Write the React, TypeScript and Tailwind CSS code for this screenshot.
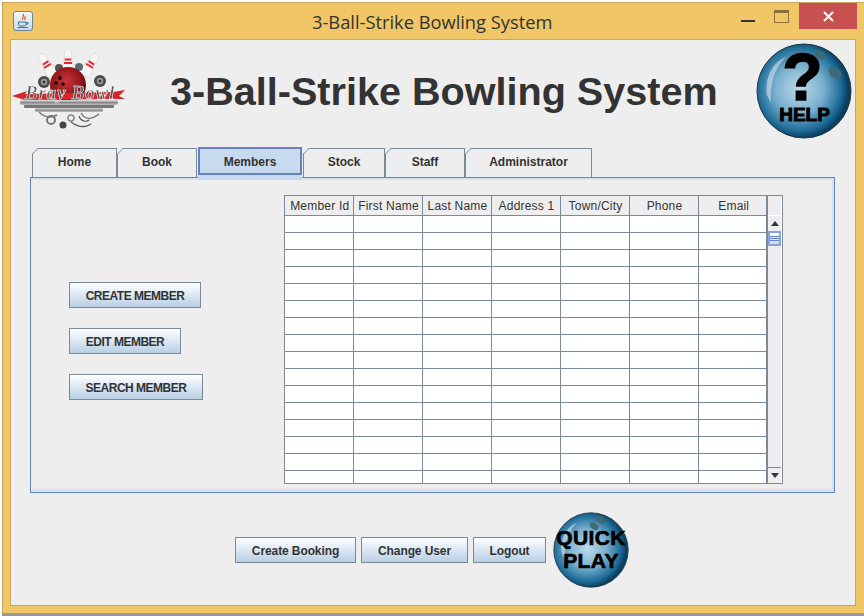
import React from "react";

const FONT = "[font-family:'Liberation_Sans',Arial,sans-serif]";

function MetalButton({ label, w, upper }: { label: string; w: number; upper?: boolean }) {
  return (
    <button
      style={{ width: w }}
      className={
        upper
          ? "shrink-0 h-[26px] pt-[1px] border border-[#7a8a99] bg-gradient-to-b from-[#ffffff] to-[#b8cfe5] text-[12px] font-bold text-[#333333] leading-none tracking-[-0.5px]"
          : "shrink-0 h-[26px] pt-[1px] border border-[#7a8a99] bg-gradient-to-b from-[#ffffff] to-[#b8cfe5] text-[12px] font-bold text-[#333333] leading-none tracking-[-0.1px]"
      }
    >
      {label}
    </button>
  );
}

function Tab({ label, w, selected }: { label: string; w: number; selected?: boolean }) {
  if (selected) {
    return (
      <div style={{ width: w }} className="relative z-10 h-[33px] shrink-0 -mb-[3px] flex flex-col">
        <div className="h-[28px] ml-[1px] mr-[1px] pt-[1px] border-2 border-[#6382bf] bg-[#c8daef] flex items-center justify-center text-[12px] font-bold text-[#333333]">
          {label}
        </div>
        <div className="flex-1 ml-[1px] mr-[1px] bg-[#c8daef]" />
      </div>
    );
  }
  return (
    <div
      style={{ width: w }}
      className="relative h-[29px] shrink-0 border-t border-r border-l border-[#7a8a99] bg-[#eeeeee] flex items-center justify-center text-[12px] font-bold text-[#333333] pb-[3px]"
    >
      <svg className="absolute -left-px -top-px" width="7" height="7" viewBox="0 0 7 7">
        <path d="M0 0H6L0 6Z" fill="#eeeeee" />
        <path d="M0 6.5L6.5 0" stroke="#7a8a99" strokeWidth="1" fill="none" />
      </svg>
      {label}
    </div>
  );
}

function Pin({ rotate, x, y }: { rotate: number; x: number; y: number }) {
  return (
    <g transform={`translate(${x} ${y}) rotate(${rotate})`}>
      <path d="M0 -13C3.5 -13 4.5 -9 3.5 -5C3 -2 6 2 6 12L-6 12C-6 2 -3 -2 -3.5 -5C-4.5 -9 -3.5 -13 0 -13Z" fill="#f6f6f6" stroke="#c8c8c8" strokeWidth="0.5" />
      <rect x="-3.2" y="-3.5" width="6.4" height="2" fill="#e8262c" />
      <rect x="-4" y="0" width="8" height="2" fill="#e8262c" />
    </g>
  );
}

function Ring({ x, y, r }: { x: number; y: number; r: number }) {
  return (
    <g>
      <circle cx={x} cy={y} r={r} fill="#4a4a4a" />
      <circle cx={x} cy={y} r={r * 0.55} fill="#9a9a9a" />
      <circle cx={x} cy={y} r={r * 0.25} fill="#3a3a3a" />
    </g>
  );
}

function Logo() {
  return (
    <svg width="116" height="82" viewBox="0 0 116 82" className="shrink-0 blur-[0.35px]">
      <defs>
        <radialGradient id="rb" cx="45%" cy="40%" r="65%">
          <stop offset="0" stopColor="#c9373c" />
          <stop offset="0.6" stopColor="#96161c" />
          <stop offset="1" stopColor="#4f0a0e" />
        </radialGradient>
        <linearGradient id="bar" x1="0" y1="0" x2="0" y2="1">
          <stop offset="0" stopColor="#e2e2e2" />
          <stop offset="0.5" stopColor="#8a8a8a" />
          <stop offset="1" stopColor="#bdbdbd" />
        </linearGradient>
      </defs>
      <Pin rotate={-32} x={36} y={15} />
      <Pin rotate={0} x={57} y={12} />
      <Pin rotate={32} x={79} y={15} />
      <Ring x={33} y={32} r={6} />
      <Ring x={89} y={31} r={6} />
      <circle cx="48" cy="18" r="4" fill="#555555" />
      <circle cx="68" cy="17" r="4" fill="#5c6a70" />
      <circle cx="57" cy="35" r="18" fill="url(#rb)" />
      <circle cx="49" cy="28" r="2" fill="#1a0505" />
      <circle cx="45" cy="33" r="1.8" fill="#1a0505" />
      <circle cx="52" cy="34" r="1.8" fill="#1a0505" />
      <path d="M1 46L16 41L14 44L102 42L114 40L108 46L114 49L100 49L14 50Z" fill="#d8262c" />
      <rect x="9" y="50" width="98" height="5" rx="2" fill="url(#bar)" />
      <rect x="13" y="55" width="90" height="3" rx="1" fill="#777777" />
      <rect x="24" y="58" width="68" height="4" rx="1" fill="url(#bar)" />
      <path d="M28 62C34 68 40 68 46 65M70 63C74 70 80 70 88 64" fill="none" stroke="#777777" strokeWidth="1.5" />
      <circle cx="40" cy="70" r="4" fill="none" stroke="#777777" strokeWidth="2" />
      <circle cx="52" cy="75" r="3.5" fill="#444444" />
      <circle cx="60" cy="68" r="3" fill="none" stroke="#888888" strokeWidth="1.5" />
      <path d="M60 72C68 78 74 78 80 74M68 66C70 72 76 72 78 70" fill="none" stroke="#555555" strokeWidth="1.2" />
      <text
        x="59"
        y="49"
        textAnchor="middle"
        fontFamily="'Liberation Serif',serif"
        fontStyle="italic"
        fontWeight="700"
        fontSize="19"
        letterSpacing="0.8"
        fill="#5a5a5a"
        stroke="#ffffff"
        strokeWidth="0.5"
      >
        Bray Bowl
      </text>
    </svg>
  );
}

function BlueBall({ id, size, holes }: { id: string; size: number; holes: [number, number, number, number][] }) {
  return (
    <svg className="absolute inset-0" width={size} height={size} viewBox="0 0 96 96">
      <defs>
        <radialGradient id={id} cx="45%" cy="48%" r="52%">
          <stop offset="0" stopColor="#bcd9e9" />
          <stop offset="0.5" stopColor="#7ab0ce" />
          <stop offset="0.86" stopColor="#1c6b97" />
          <stop offset="1" stopColor="#0a3f5f" />
        </radialGradient>
      </defs>
      <circle cx="48" cy="48" r="47" fill={`url(#${id})`} stroke="#24343f" strokeWidth="1" />
      <path d="M11 52C8 34 18 18 30 14C20 24 14 36 15 60Z" fill="#ffffff" opacity="0.45" />
      {holes.map(([cx, cy, rx, ry], i) => (
        <ellipse key={i} cx={cx} cy={cy} rx={rx} ry={ry} transform={`rotate(35 ${cx} ${cy})`} fill="#3f6a78" />
      ))}
    </svg>
  );
}

function HelpBall() {
  return (
    <div className="relative w-[96px] h-[96px] shrink-0">
      <BlueBall id="hb" size={96} holes={[[64, 12, 6, 4], [79, 30, 7, 5]]} />
      <div className="absolute left-0 right-[3px] top-[8px] text-center text-[66px] leading-[52px] font-bold text-black [-webkit-text-stroke:1.5px_black]">?</div>
      <div className="absolute left-0 right-[-1px] top-[64px] text-center text-[19px] leading-[16px] font-bold text-black [-webkit-text-stroke:1px_black]">HELP</div>
    </div>
  );
}

function QuickBall() {
  return (
    <div className="relative w-[76px] h-[76px] shrink-0">
      <BlueBall id="qb" size={76} holes={[[60, 10, 7, 4], [52, 18, 6, 4]]} />
      <div className="absolute inset-x-0 top-[14px] text-center text-[21px] leading-[23px] font-bold text-black tracking-[0.4px] [-webkit-text-stroke:0.7px_black]">
        QUICK
        <br />
        PLAY
      </div>
    </div>
  );
}

const HEAD = ["Member Id", "First Name", "Last Name", "Address 1", "Town/City", "Phone", "Email"];
const ROWS = Array.from({ length: 16 }, (_, i) => i);

function MembersTable() {
  return (
    <div className="flex w-[499px] h-[289px] border border-[#7a8a99] bg-white">
      <div className="w-[482px] shrink-0 overflow-hidden">
        <table className="table-fixed border-collapse w-[482px]">
          <thead>
            <tr className="h-[19px] bg-[#eeeeee]">
              {HEAD.map((h, i) => (
                <th
                  key={h}
                  className={
                    i === 0
                      ? "w-[68px] p-0 pt-[2px] pl-[2px] border-r border-b border-[#7a8a99] text-[12px] font-normal text-[#333333] whitespace-nowrap leading-none tracking-[0.2px]"
                      : "w-[69px] p-0 pt-[2px] pl-[2px] border-r border-b border-[#7a8a99] text-[12px] font-normal text-[#333333] last:border-r-0 whitespace-nowrap leading-none tracking-[0.2px]"
                  }
                >
                  {h}
                </th>
              ))}
            </tr>
          </thead>
          <tbody>
            {ROWS.map((r) => (
              <tr key={r} className="h-[17px]">
                {HEAD.map((h) => (
                  <td key={h} className="p-0 border-r border-b border-[#7a8a99] last:border-r-0" />
                ))}
              </tr>
            ))}
          </tbody>
        </table>
      </div>
      <div className="w-[15px] shrink-0 flex flex-col bg-[#eeeeee] border-l-2 border-[#7a8a99] -ml-px">
        <div className="h-[20px] border-b border-white" />
        <div className="h-[15px] flex items-center justify-center">
          <div className="w-0 h-0 border-x-[4px] border-x-transparent border-b-[5px] border-b-[#333333]" />
        </div>
        <div className="h-[15px] border-2 border-[#8aa5d6] bg-gradient-to-b from-[#ffffff] to-[#c8daef] flex flex-col items-center justify-center gap-[1px]">
          <div className="w-[9px] h-px bg-[#6382bf]" />
          <div className="w-[9px] h-px bg-[#6382bf]" />
          <div className="w-[9px] h-px bg-[#6382bf]" />
        </div>
        <div className="flex-1" />
        <div className="h-[16px] border-t border-[#7a8a99] flex items-center justify-center">
          <div className="w-0 h-0 border-x-[4px] border-x-transparent border-t-[5px] border-t-[#333333]" />
        </div>
      </div>
    </div>
  );
}

export default function App() {
  return (
    <div className={`w-[864px] h-[616px] overflow-hidden bg-white pt-[2px] pl-[2px] ${FONT}`}>
      <div className="w-[864px] h-[611px] bg-[#f0c667] border-t border-l border-[#c8a65c] flex flex-col shadow-[0_3px_0_#9a9a9a]">
        {/* title bar */}
        <div className="h-[36px] shrink-0 flex pl-[10px]">
          <div className="w-[20px] h-[20px] mt-[8px] rounded-[3px] border border-[#6f8396] bg-gradient-to-b from-[#f4f8fb] to-[#c5d8e8] flex items-center justify-center shrink-0">
            <svg width="14" height="16" viewBox="0 0 14 16">
              <path d="M7 1C9 3 5 4 7 7M9 3C10 4 8 5 9 7" fill="none" stroke="#d9642a" strokeWidth="1.3" />
              <path d="M2.5 9H10V11C10 12.5 9 13 7 13H5.5C3.5 13 2.5 12.5 2.5 11Z" fill="none" stroke="#41769c" strokeWidth="1" />
              <path d="M10 9.5H12V11H10M1.5 14.5H12" fill="none" stroke="#41769c" strokeWidth="1" />
            </svg>
          </div>
          <div className="w-[279px] shrink-0" />
          <div className="w-[242px] pt-[9px] text-[18.3px] leading-[20px] text-[#333333] whitespace-nowrap font-['Open_Sans',sans-serif] shrink-0">
            3-Ball-Strike Bowling System
          </div>
          <div className="w-[187px] shrink-0" />
          <div className="w-[14px] h-[2px] mt-[17px] bg-[#333333] shrink-0" />
          <div className="w-[19px] shrink-0" />
          <div className="w-[15px] h-[13px] mt-[7px] border border-[#8a7238] border-t-[3px] shrink-0" />
          <div className="w-[10px] shrink-0" />
          <div className="w-[58px] h-[26px] bg-[#c75050] flex items-center justify-center shrink-0">
            <svg width="11" height="11" viewBox="0 0 11 11">
              <path d="M1 1L10 10M10 1L1 10" stroke="#ffffff" strokeWidth="2" />
            </svg>
          </div>
        </div>

        {/* client area */}
        <div className="ml-[7px] w-[846px] h-[567px] shrink-0 bg-[#eeeeee] border border-[#c8a65c] flex flex-col">
          <div className="h-[107px] shrink-0 flex items-start">
            <div className="mt-[10px] shrink-0">
              <Logo />
            </div>
            <div className="w-[43px] shrink-0" />
            <div className="w-[586px] shrink-0 mt-[25px] text-[39.6px] leading-[52px] font-bold text-[#333333] whitespace-nowrap">
              3-Ball-Strike Bowling System
            </div>
            <div className="mt-[3px] shrink-0">
              <HelpBall />
            </div>
          </div>

          <div className="h-[30px] shrink-0 pl-[21px] flex items-end">
            <Tab label="Home" w={85} />
            <Tab label="Book" w={80} />
            <Tab label="Members" w={106} selected />
            <Tab label="Stock" w={82} />
            <Tab label="Staff" w={80} />
            <Tab label="Administrator" w={127} />
          </div>

          <div className="ml-[19px] w-[805px] h-[316px] shrink-0 border border-[#6382bf] bg-[#eeeeee] shadow-[inset_0_2px_0_#d6e3f3,inset_-2px_0_0_#d6e3f3,inset_0_-3px_0_#d6e3f3,inset_2px_0_0_#eeeeee] flex">
            <div className="w-[253px] shrink-0 pl-[38px] pt-[104px] flex flex-col items-start gap-[20px]">
              <MetalButton label="CREATE MEMBER" w={132} upper />
              <MetalButton label="EDIT MEMBER" w={112} upper />
              <MetalButton label="SEARCH MEMBER" w={134} upper />
            </div>
            <div className="pt-[17px]">
              <MembersTable />
            </div>
          </div>

          <div className="flex-1 flex pl-[224px] items-start">
            <div className="mt-[44px] flex gap-[5px]">
              <MetalButton label="Create Booking" w={121} />
              <MetalButton label="Change User" w={107} />
              <MetalButton label="Logout" w={73} />
            </div>
            <div className="ml-[7px] mt-[19px]">
              <QuickBall />
            </div>
          </div>
        </div>
      </div>
    </div>
  );
}
